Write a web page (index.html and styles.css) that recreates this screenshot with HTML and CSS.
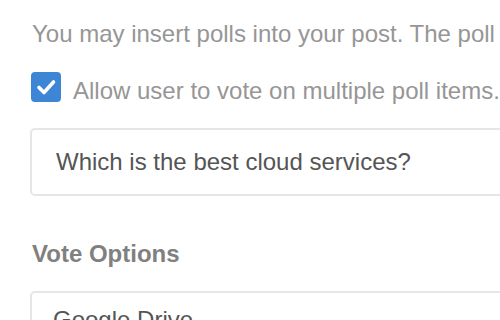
FILE: index.html
```html
<!DOCTYPE html>
<html>
<head>
<meta charset="utf-8">
<link rel="stylesheet" href="styles.css">
</head>
<body>
<div class="page">
  <p class="intro">You may insert polls into your post. The poll will appear at the top of the topic.</p>
  <label class="check-row">
    <span class="checkbox"><svg width="30" height="30" viewBox="0 0 30 30"><path d="M8 15.5 L13 20.5 L22.5 10" fill="none" stroke="#fff" stroke-width="3.6" stroke-linecap="round" stroke-linejoin="round"/></svg></span>
    <span class="check-label">Allow user to vote on multiple poll items.</span>
  </label>
  <div class="field question">Which is the best cloud services?</div>
  <h3 class="section-title">Vote Options</h3>
  <div class="field option">Google Drive</div>
</div>
</body>
</html>
```

FILE: styles.css
```css
html, body {
  margin: 0;
  padding: 0;
  background: #ffffff;
  overflow: hidden;
}
.page {
  width: 900px;
  padding: 20px 0 0 30px;
  font-family: "Liberation Sans", Arial, sans-serif;
  font-size: 24px;
  line-height: 28px;
}
.intro {
  margin: 0 0 0 2px;
  color: #969696;
  white-space: nowrap;
}
.check-row {
  display: flex;
  align-items: flex-start;
  gap: 12px;
  margin-top: 24px;
  margin-left: 1px;
}
.checkbox {
  width: 30px;
  height: 30px;
  border-radius: 4px;
  background: #3d86d6;
  display: flex;
}
.check-label {
  margin-top: 5px;
  color: #969696;
  white-space: nowrap;
}
.field {
  border: 2px solid #e6e6e6;
  border-radius: 5px;
  color: #555555;
  white-space: nowrap;
}
.question {
  margin-top: 23px;
  padding: 18px 24px;
}
.section-title {
  margin: 44px 0 0 2px;
  font-size: 24px;
  line-height: 28px;
  font-weight: bold;
  color: #808080;
}
.option {
  margin-top: 23px;
  padding: 13px 21px;
}
```
